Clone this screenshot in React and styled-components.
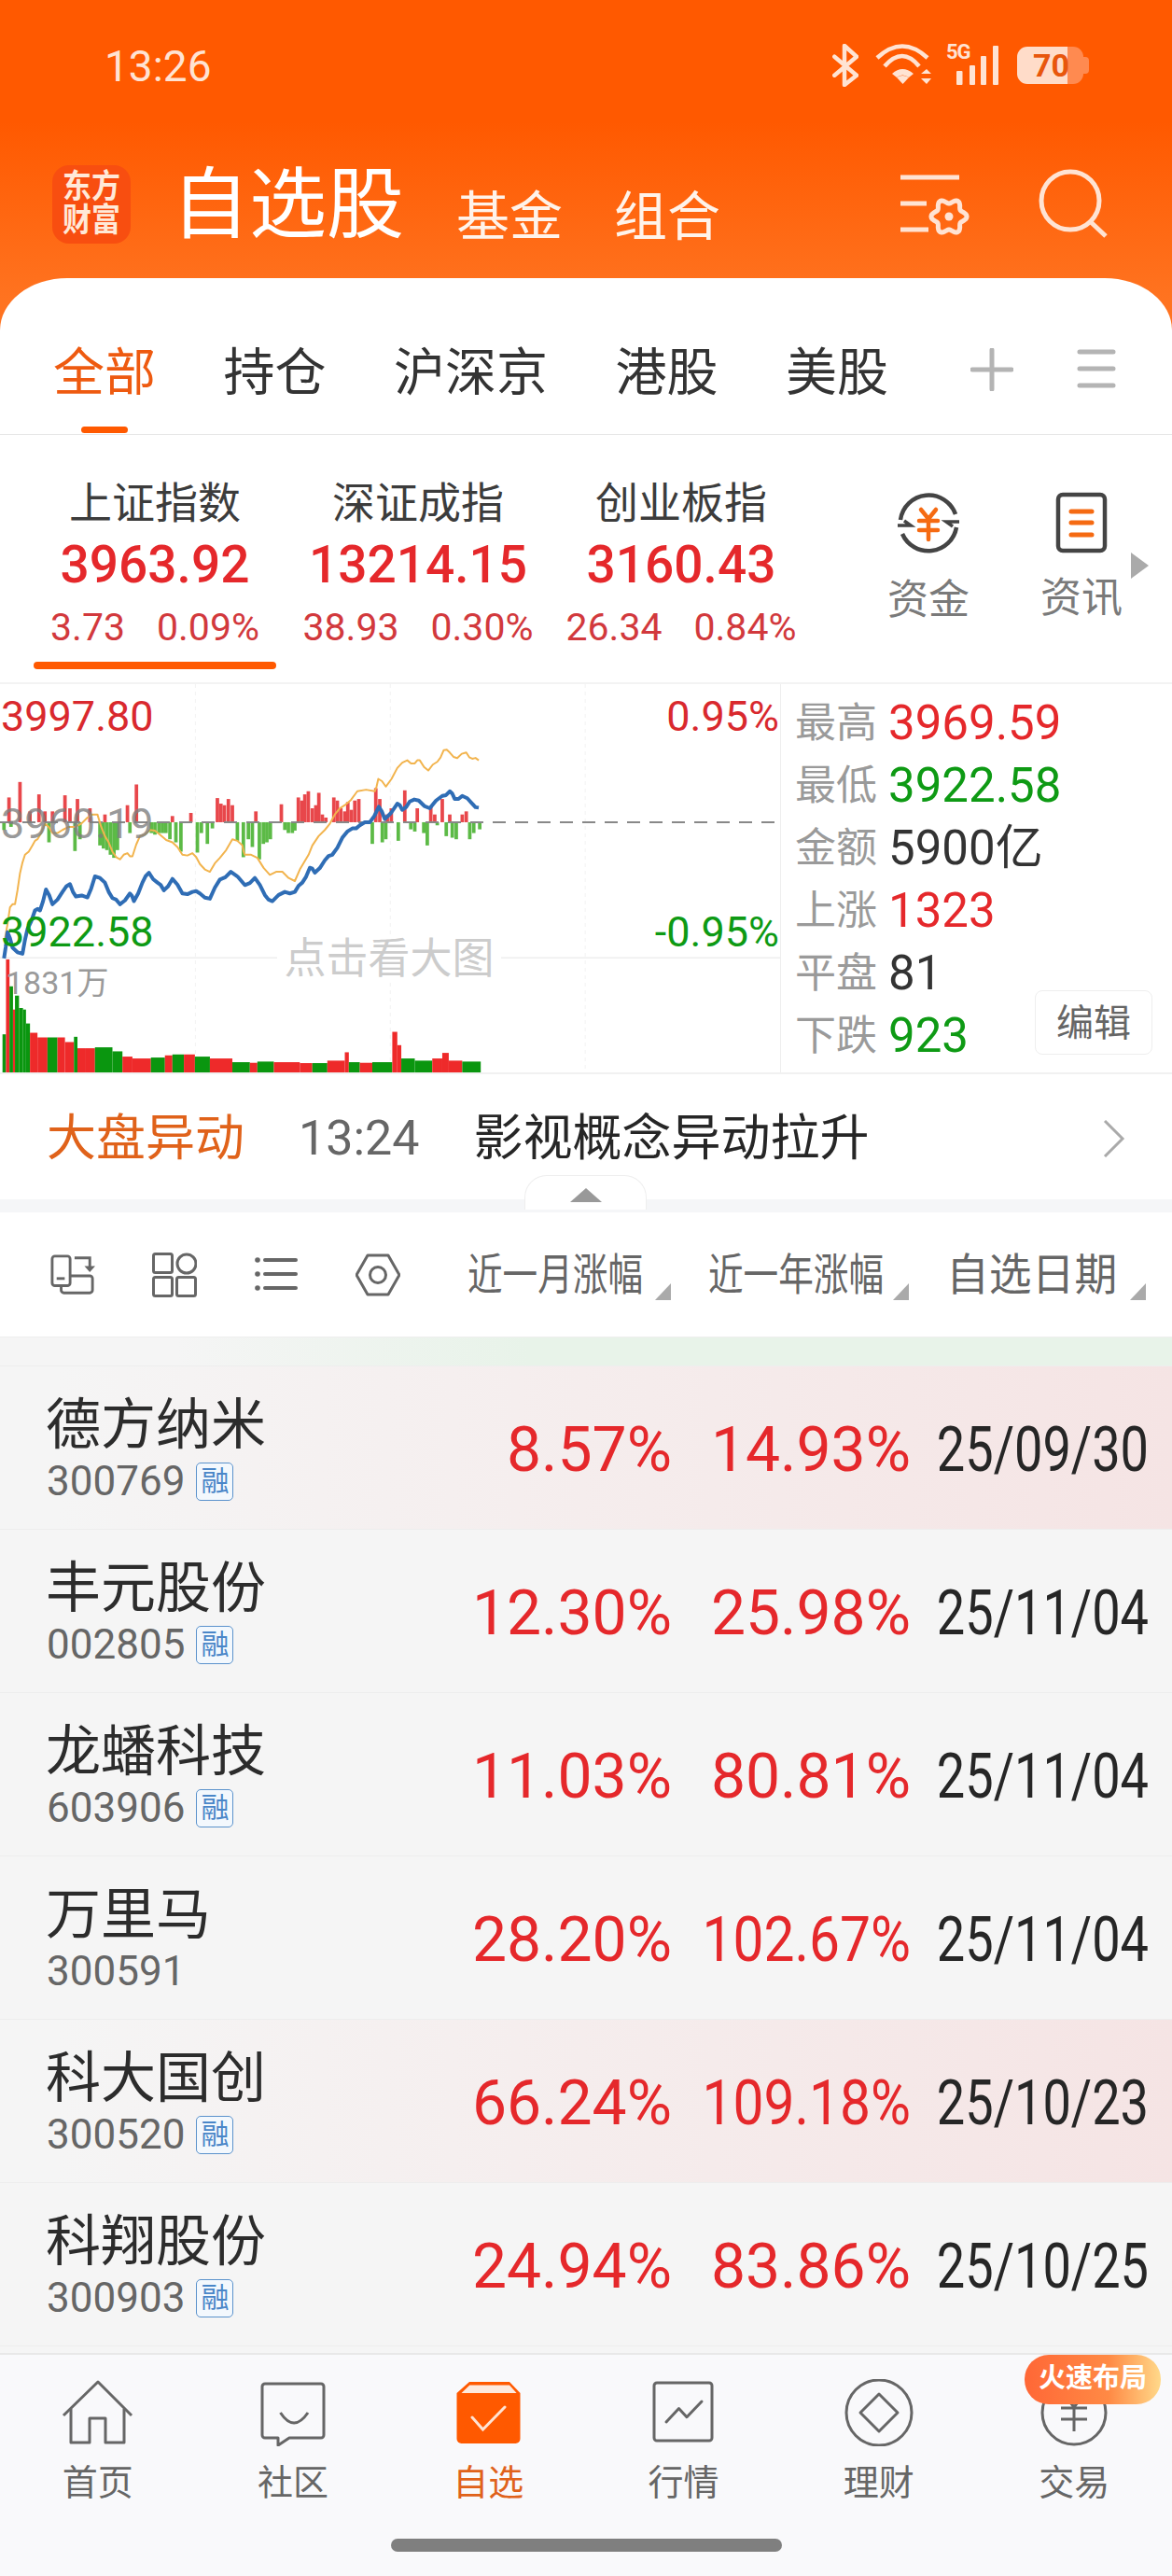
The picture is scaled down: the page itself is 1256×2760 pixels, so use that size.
import styled, { createGlobalStyle } from 'styled-components';

const GlobalStyle = createGlobalStyle`
  html, body {
    margin: 0;
    padding: 0;
    background: #fff;
  }
  * {
    box-sizing: border-box;
  }
`;

const RED = '#e5282b';
const GREEN = '#0e9a14';
const ICON = '#666';
const CREAM = '#ffe3d3';

const orangePts = [[10,830],[20,730],[30,720],[40,620],[50,560],[65,530],[75,510],[90,460],[105,490],[125,480],[150,470],[175,440],[195,430],[210,500],[225,550],[240,575],[255,555],[265,565],[280,500],[300,480],[320,495],[345,520],[365,560],[385,555],[400,590],[420,615],[440,570],[465,510],[485,530],[490,560],[515,570],[540,625],[565,615],[590,645],[610,580],[625,530],[650,480],[670,430],[690,400],[715,355],[750,355],[757,315],[772,340],[795,280],[815,255],[830,265],[840,255],[857,288],[875,260],[888,222],[900,230],[915,248],[933,230],[945,250],[958,255]];
const bluePts = [[8,895],[15,810],[25,860],[45,880],[55,800],[70,740],[80,740],[92,672],[105,720],[125,680],[140,655],[152,695],[175,698],[190,630],[210,650],[225,700],[240,720],[260,685],[268,710],[285,650],[298,618],[315,650],[328,675],[345,638],[365,685],[385,680],[400,685],[420,702],[440,640],[462,615],[490,658],[510,635],[530,690],[545,710],[570,680],[590,680],[605,650],[620,602],[630,618],[650,578],[665,560],[685,505],[705,475],[720,465],[740,455],[758,405],[770,445],[795,395],[805,415],[820,388],[838,385],[860,410],[885,370],[900,355],[910,380],[925,370],[945,395],[958,408]];
const redBars = [[18,375],[40,325],[60,420],[78,365],[90,420],[105,420],[130,368],[140,410],[155,380],[180,410],[210,430],[255,400],[273,333],[345,435],[382,425],[435,377],[442,395],[449,400],[457,380],[465,400],[512,420],[563,397],[597,375],[604,385],[610,365],[617,355],[625,410],[632,400],[638,360],[645,430],[652,440],[668,375],[675,385],[682,410],[690,420],[696,390],[703,415],[710,385],[718,380],[752,345],[760,380],[775,430],[783,410],[810,352],[835,410],[862,405],[870,430],[885,380],[900,430],[925,430],[933,420]];
const greenBars = [[8,480],[22,470],[98,520],[150,548],[160,510],[200,530],[207,540],[214,545],[221,560],[228,570],[235,545],[260,490],[303,490],[310,495],[318,490],[325,490],[332,490],[340,510],[352,520],[362,550],[395,553],[403,490],[415,525],[425,475],[475,515],[487,568],[497,510],[505,535],[519,575],[527,525],[534,520],[541,510],[570,480],[577,490],[585,490],[590,482],[745,525],[765,520],[772,510],[797,515],[822,478],[830,485],[855,530],[848,490],[875,465],[893,500],[905,505],[913,510],[940,510],[948,490],[960,478]];
const volumes = [[5,12,1140,'g'],[12,19,898,'r'],[19,26,985,'g'],[26,31,1060,'r'],[30,38,1015,'g'],[38,46,1055,'g'],[46,52,1060,'g'],[52,60,1105,'g'],[60,75,1135,'r'],[75,95,1150,'r'],[95,115,1150,'g'],[115,130,1150,'r'],[130,148,1165,'r'],[148,155,1148,'g'],[155,170,1185,'r'],[170,190,1185,'r'],[190,225,1182,'g'],[225,245,1195,'g'],[245,265,1212,'r'],[265,302,1218,'r'],[302,330,1215,'g'],[330,345,1208,'r'],[345,368,1205,'g'],[368,390,1205,'r'],[390,420,1212,'g'],[420,465,1218,'r'],[465,500,1230,'g'],[500,515,1232,'r'],[515,548,1228,'g'],[548,600,1230,'r'],[600,625,1233,'r'],[625,655,1233,'g'],[655,690,1225,'r'],[690,698,1198,'r'],[698,720,1230,'g'],[720,745,1232,'r'],[745,785,1230,'g'],[785,795,1132,'r'],[795,803,1175,'r'],[803,830,1218,'g'],[830,865,1225,'g'],[865,885,1218,'r'],[885,898,1200,'r'],[898,925,1225,'r'],[925,962,1228,'g']];

// the real line is a bit jagged, so add a small wobble between the read-off points
const jitter = (pts) =>
  pts.flatMap((p, i) => {
    if (i === 0) return [p];
    const prev = pts[i - 1];
    const mid = [(p[0] + prev[0]) / 2, (p[1] + prev[1]) / 2 + (i % 2 ? 5 : -5)];
    return [mid, p];
  });

const line = (pts) => pts.map((p) => p.join(',')).join(' ');

const gearPath = (() => {
  const out = [];
  for (let i = 0; i < 72; i++) {
    const t = (i / 72) * Math.PI * 2;
    const r = 16.5 + 2.6 * Math.cos(6 * t);
    out.push(`${(54 + r * Math.cos(t)).toFixed(1)} ${(47 + r * Math.sin(t)).toFixed(1)}`);
  }
  return `M${out.join('L')}Z`;
})();

const indices = [
  { label: '上证指数', value: '3963.92', diff: '3.73', pct: '0.09%', active: true },
  { label: '深证成指', value: '13214.15', diff: '38.93', pct: '0.30%' },
  { label: '创业板指', value: '3160.43', diff: '26.34', pct: '0.84%' },
];

const stats = [
  { label: '最高', value: '3969.59', color: RED },
  { label: '最低', value: '3922.58', color: GREEN },
  { label: '金额', value: '5900亿', color: '#333' },
  { label: '上涨', value: '1323', color: RED },
  { label: '平盘', value: '81', color: '#333' },
  { label: '下跌', value: '923', color: GREEN },
];

const stocks = [
  { name: '德方纳米', code: '300769', rong: true, month: '8.57%', year: '14.93%', date: '25/09/30', hot: true },
  { name: '丰元股份', code: '002805', rong: true, month: '12.30%', year: '25.98%', date: '25/11/04' },
  { name: '龙蟠科技', code: '603906', rong: true, month: '11.03%', year: '80.81%', date: '25/11/04' },
  { name: '万里马', code: '300591', month: '28.20%', year: '102.67%', date: '25/11/04' },
  { name: '科大国创', code: '300520', rong: true, month: '66.24%', year: '109.18%', date: '25/10/23', hot: true },
  { name: '科翔股份', code: '300903', rong: true, month: '24.94%', year: '83.86%', date: '25/10/25' },
];

const pctSqueeze = (text) => (text.length > 6 ? 0.89 : 1);

const BluetoothIcon = () => (
  <svg width="28" height="46" viewBox="0 0 28 46" fill="none" stroke={CREAM} strokeWidth="4.5" strokeLinejoin="round" strokeLinecap="round">
    <path d="M2.3 13.7L26 33.7L13 44V2L26 13.7L2.3 33.7" />
  </svg>
);

const WifiIcon = () => (
  <svg width="60" height="46" viewBox="0 0 60 46" fill="none">
    <g stroke={CREAM} strokeWidth="4.5">
      <path d="M2 15Q29 -10 56 15" />
      <path d="M10 24Q29 2 47 24" />
    </g>
    <path d="M18 32Q29 22 41 32L36 36Q29 31 23 36Z" fill={CREAM} />
    <path d="M23 36Q29 32 36 36L29.5 43Z" fill={CREAM} />
    <path d="M49 32L55 27L60 32ZM49 37H60L55 43Z" fill={CREAM} />
  </svg>
);

const SignalIcon = () => (
  <svg width="58" height="44" viewBox="0 0 58 44" fill={CREAM}>
    <rect x="11" y="28" width="6.5" height="15" rx="1" />
    <rect x="25" y="22" width="6" height="21" rx="1" />
    <rect x="37" y="12" width="6" height="31" rx="1" />
    <rect x="50" y="1" width="6" height="42" rx="1" />
  </svg>
);

const SettingsIcon = () => (
  <svg width="78" height="79" viewBox="0 -7 78 79" fill="none" stroke={CREAM} strokeWidth="5">
    <path d="M2 5H65M2 33H30M2 61H32" />
    <path d={gearPath} strokeLinejoin="round" />
    <circle cx="54" cy="47" r="4.5" fill={CREAM} stroke="none" />
  </svg>
);

const SearchIcon = () => (
  <svg width="80" height="80" viewBox="0 0 80 80" fill="none" stroke={CREAM} strokeWidth="5">
    <circle cx="37" cy="37" r="31" />
    <path d="M58 59L75 75" />
  </svg>
);

const PlusIcon = () => (
  <svg width="46" height="46" viewBox="0 0 46 46" stroke="#b4b4b4" strokeWidth="5" strokeLinecap="round">
    <path d="M23 2V44M2 23H44" />
  </svg>
);

const MenuIcon = () => (
  <svg width="42" height="44" viewBox="0 0 42 44" stroke="#b4b4b4" strokeWidth="5" strokeLinecap="round">
    <path d="M3 4H39M3 22H39M3 40H39" />
  </svg>
);

const FundIcon = () => (
  <svg width="68" height="68" viewBox="0 0 68 68" fill="none">
    <g stroke="#444" strokeWidth="4.5">
      <path d="M4 30A30.5 30.5 0 0 1 63 24" />
      <path d="M64 38A30.5 30.5 0 0 1 6 45" />
      <path d="M1 36H15L8 31" strokeWidth="3.5" />
      <path d="M67 32H53L60 37" strokeWidth="3.5" />
    </g>
    <g stroke="#f56a12" strokeWidth="4.5" strokeLinecap="round">
      <path d="M26 19L34 29L42 19M24 31H44M24 41H44M34 29V51" />
    </g>
  </svg>
);

const NewsIcon = () => (
  <svg width="56" height="66" viewBox="0 0 56 66" fill="none">
    <rect x="3" y="3" width="50" height="60" rx="5" stroke="#444" strokeWidth="4.5" />
    <path d="M17 21H39M17 33H39M17 46H39" stroke="#f56a12" strokeWidth="5" strokeLinecap="round" />
  </svg>
);

const SwapIcon = () => (
  <svg width="48" height="48" viewBox="0 0 50 48" fill="none" stroke={ICON} strokeWidth="3">
    <rect x="2" y="3" width="20" height="33" rx="3" />
    <path d="M7 28H16" />
    <path d="M22 25H44a3 3 0 0 1 3 3V41a3 3 0 0 1-3 3H15a3 3 0 0 1-3-3V36" />
    <path d="M27 5H44V18" />
    <path d="M38 14H50L44 21Z" fill={ICON} stroke="none" />
  </svg>
);

const GridIcon = () => (
  <svg width="48" height="48" viewBox="0 0 48 48" fill="none" stroke={ICON} strokeWidth="3">
    <rect x="1.5" y="1.5" width="20" height="20" rx="2" />
    <circle cx="37" cy="12" r="10" />
    <rect x="1.5" y="26.5" width="20" height="20" rx="2" />
    <rect x="26.5" y="26.5" width="20" height="20" rx="2" />
  </svg>
);

const ListIcon = () => (
  <svg width="48" height="48" viewBox="0 0 48 48" fill={ICON}>
    <circle cx="4" cy="8" r="2.8" />
    <circle cx="4" cy="23" r="2.8" />
    <circle cx="4" cy="38" r="2.8" />
    <path d="M12 8H45M12 23H45M12 38H45" stroke={ICON} strokeWidth="4" strokeLinecap="round" />
  </svg>
);

const HexIcon = () => (
  <svg width="48" height="48" viewBox="0 0 48 48" fill="none" stroke={ICON} strokeWidth="3">
    <path d="M13 3H35L47 24L35 45H13L1 24Z" strokeLinejoin="round" />
    <circle cx="24" cy="24" r="8.5" />
  </svg>
);

const HomeIcon = () => (
  <svg width="84" height="72" viewBox="0 0 84 72" fill="none" stroke={ICON} strokeWidth="3" strokeLinejoin="round">
    <path d="M5 39L42 3L78 39" />
    <path d="M13 32V68H33V42H50V68H70V32" />
  </svg>
);

const ChatIcon = () => (
  <svg width="84" height="72" viewBox="0 0 84 72" fill="none" stroke={ICON} strokeWidth="3" strokeLinejoin="round">
    <path d="M12 5H72a3 3 0 0 1 3 3V60a3 3 0 0 1-3 3H38L26 71V63H12a3 3 0 0 1-3-3V8a3 3 0 0 1 3-3Z" />
    <path d="M28.5 36Q43 58 58 36" />
  </svg>
);

const WatchIcon = () => (
  <svg width="84" height="72" viewBox="0 0 84 72" fill="none">
    <path d="M22 3H65L76.5 15V64a5 5 0 0 1-5 5H13.500a5 5 0 0 1-5-5V15Z" fill="#ff5900" />
    <path d="M13.500 15L22.300 6.500H65L72.600 15Z" fill="#fde9dd" />
    <path d="M25 41L36.500 54L60 30" stroke="#ffe3d3" strokeWidth="3" strokeLinecap="round" />
  </svg>
);

const MarketIcon = () => (
  <svg width="84" height="72" viewBox="0 0 84 72" fill="none" stroke={ICON} strokeWidth="3" strokeLinejoin="round">
    <rect x="10" y="4" width="62" height="62" rx="3" />
    <path d="M23 46L36.500 31.500L45 40.700L61 24" strokeLinecap="round" />
  </svg>
);

const WealthIcon = () => (
  <svg width="84" height="72" viewBox="0 0 84 72" fill="none" stroke={ICON} strokeWidth="3" strokeLinejoin="round">
    <circle cx="42" cy="36" r="35" />
    <path d="M42 16L62 36L42 56L22 36Z" />
  </svg>
);

const TradeIcon = () => (
  <svg width="84" height="72" viewBox="0 0 84 72" fill="none" stroke={ICON} strokeWidth="3">
    <circle cx="42" cy="36" r="34" />
    <path d="M34 20L42 30L50 20M28 31H56M28 43H56M42 30V56" />
  </svg>
);

const navItems = [
  { label: '首页', Icon: HomeIcon },
  { label: '社区', Icon: ChatIcon },
  { label: '自选', Icon: WatchIcon, active: true },
  { label: '行情', Icon: MarketIcon },
  { label: '理财', Icon: WealthIcon },
  { label: '交易', Icon: TradeIcon },
];

const App = () => (
  <Page>
    <GlobalStyle />
    <Top>
      <StatusBar>
        <Clock>13:26</Clock>
        <StatusIcons>
          <BluetoothIcon />
          <WifiIcon />
          <Network>
            <SignalIcon />
            <FiveG>5G</FiveG>
          </Network>
          <Battery>70</Battery>
        </StatusIcons>
      </StatusBar>
      <Header>
        <Logo>
          <span>东方</span>
          <span>财富</span>
        </Logo>
        <Title>自选股</Title>
        <SubTitle>基金</SubTitle>
        <SubTitle>组合</SubTitle>
        <HeaderActions>
          <SettingsIcon />
          <SearchIcon />
        </HeaderActions>
      </Header>
      <TabPanel>
        <Tab $active>
          全部
          <TabMark $active />
        </Tab>
        <Tab>
          持仓
          <TabMark />
        </Tab>
        <Tab>
          沪深京
          <TabMark />
        </Tab>
        <Tab>
          港股
          <TabMark />
        </Tab>
        <Tab>
          美股
          <TabMark />
        </Tab>
        <TabTools>
          <PlusIcon />
          <MenuIcon />
        </TabTools>
      </TabPanel>
    </Top>

    <IndexBar>
      <IndexList>
        {indices.map((item) => (
          <IndexCol key={item.label}>
            <IndexLabel>{item.label}</IndexLabel>
            <IndexValue>{item.value}</IndexValue>
            <IndexDiff>
              <span>{item.diff}</span>
              <span>{item.pct}</span>
            </IndexDiff>
            <IndexMark $active={item.active} />
          </IndexCol>
        ))}
      </IndexList>
      <Shortcut>
        <FundIcon />
        <ShortcutLabel>资金</ShortcutLabel>
      </Shortcut>
      <Shortcut>
        <NewsIcon />
        <ShortcutLabel>资讯</ShortcutLabel>
      </Shortcut>
      <MoreArrow />
    </IndexBar>

    <ChartRow>
      <Chart>
        <ChartSvg viewBox="0 9 1561 1254" preserveAspectRatio="none">
          <path d="M391 9V1263M781 9V1263M1171 9V1263" stroke="#f3f3f3" strokeWidth="1" strokeDasharray="4 4" vectorEffect="non-scaling-stroke" />
          <path d="M0 893H1561" stroke="#eee" strokeWidth="1.5" vectorEffect="non-scaling-stroke" />
          {redBars.map(([x, top]) => (
            <rect key={`r${x}`} x={x - 3.5} y={top} width="7" height={455 - top} fill="#e8474b" />
          ))}
          {greenBars.map(([x, bottom]) => (
            <rect key={`g${x}`} x={x - 3.5} y="455" width="7" height={bottom - 455} fill="#5cba46" />
          ))}
          <path d="M0 455H1561" stroke="#888" strokeWidth="2" strokeDasharray="14 10" vectorEffect="non-scaling-stroke" />
          <polyline points={line(jitter(orangePts))} fill="none" stroke="#f2b44e" strokeWidth="2" strokeLinejoin="round" vectorEffect="non-scaling-stroke" />
          <polyline points={line(jitter(bluePts))} fill="none" stroke="#2f6db5" strokeWidth="4" strokeLinejoin="round" vectorEffect="non-scaling-stroke" />
          {volumes.map(([x1, x2, top, kind]) => (
            <rect key={x1} x={x1} y={top} width={x2 - x1} height={1263 - top} fill={kind === 'r' ? '#ee2a2a' : '#0a960f'} />
          ))}
        </ChartSvg>
        <ChartLabel $top={10} $left={1} $color="#d9292e">3997.80</ChartLabel>
        <ChartLabel $top={10} $right={1} $color="#d9292e">0.95%</ChartLabel>
        <ChartLabel $top={125} $left={1} $color="rgba(125,125,125,0.8)">3960.19</ChartLabel>
        <ChartLabel $top={241} $left={1} $color="#0e9a14">3922.58</ChartLabel>
        <ChartLabel $top={241} $right={1} $color="#0e9a14">-0.95%</ChartLabel>
        <VolumeLabel>1831万</VolumeLabel>
        <ChartHint>点击看大图</ChartHint>
      </Chart>
      <StatPanel>
        {stats.map((item) => (
          <StatRow key={item.label}>
            <StatLabel>{item.label}</StatLabel>
            <StatValue $color={item.color}>{item.value}</StatValue>
          </StatRow>
        ))}
        <EditButton>编辑</EditButton>
      </StatPanel>
    </ChartRow>

    <NewsRow>
      <NewsTitle>大盘异动</NewsTitle>
      <NewsTime>13:24</NewsTime>
      <NewsText>影视概念异动拉升</NewsText>
      <svg width="24" height="40" viewBox="0 0 24 40" fill="none" stroke="#aaa" strokeWidth="3">
        <path d="M2 1L21 20L2 39" />
      </svg>
    </NewsRow>

    <Divider>
      <Handle>
        <HandleArrow />
      </Handle>
    </Divider>

    <ColumnHead>
      <ViewIcons>
        <SwapIcon />
        <GridIcon />
        <ListIcon />
        <HexIcon />
      </ViewIcons>
      <SortCols>
        <SortCol $gap={12}>
          <SortText $width={189} $squeeze={0.8}>近一月涨幅</SortText>
          <SortMark />
        </SortCol>
        <SortCol $gap={12}>
          <SortText $width={186} $squeeze={0.8}>近一年涨幅</SortText>
          <SortMark />
        </SortCol>
        <SortCol $gap={14}>
          <SortText $width={183} $squeeze={0.975}>自选日期</SortText>
          <SortMark />
        </SortCol>
      </SortCols>
    </ColumnHead>

    <StockList>
      <TintStrip />
      {stocks.map((s) => (
        <StockRow key={s.code} $hot={s.hot}>
          <NameCol>
            <StockName>{s.name}</StockName>
            <CodeLine>
              <StockCode>{s.code}</StockCode>
              {s.rong && <RongTag>融</RongTag>}
            </CodeLine>
          </NameCol>
          <ValueCell $width={230} $color={RED} $squeeze={pctSqueeze(s.month)}>{s.month}</ValueCell>
          <ValueCell $width={256} $color={RED} $squeeze={pctSqueeze(s.year)}>{s.year}</ValueCell>
          <ValueCell $width={255} $color="#262626" $squeeze={0.82}>{s.date}</ValueCell>
        </StockRow>
      ))}
    </StockList>

    <Nav>
      <NavGrid>
        {navItems.map(({ label, Icon, active }) => (
          <NavItem key={label} $active={active}>
            <Icon />
            <span>{label}</span>
          </NavItem>
        ))}
      </NavGrid>
      <HomeBar />
      <PromoBadge>火速布局</PromoBadge>
    </Nav>
  </Page>
);

const Page = styled.div`
  position: relative;
  display: flex;
  flex-direction: column;
  width: 1256px;
  height: 2760px;
  overflow: hidden;
  background: #fff;
  font-family: Roboto, 'Noto Sans CJK SC', sans-serif;
`;

const Top = styled.div`
  background: linear-gradient(180deg, #ff5900 0, #ff5900 130px, #ff7320 320px);
`;

const StatusBar = styled.div`
  display: flex;
  align-items: center;
  justify-content: space-between;
  height: 140px;
  padding: 0 95px 0 112px;
  color: ${CREAM};
`;

const Clock = styled.div`
  font-size: 46px;
  line-height: 46px;
  margin-top: 2px;
`;

const StatusIcons = styled.div`
  display: flex;
  align-items: center;
  gap: 18px;
`;

const Network = styled.div`
  position: relative;
  display: flex;
  margin-left: -2px;
`;

const FiveG = styled.span`
  position: absolute;
  top: -3px;
  left: 0;
  font-size: 22px;
  line-height: 22px;
  font-weight: 700;
  letter-spacing: -1px;
  color: ${CREAM};
`;

const Battery = styled.div`
  position: relative;
  width: 71px;
  height: 40px;
  padding-right: 15px;
  border-radius: 11px;
  background: linear-gradient(90deg, #ffdcc9 76%, #ff8a50 76%);
  color: #e8560c;
  font-size: 34px;
  line-height: 40px;
  font-weight: 700;
  text-align: right;

  &::after {
    content: '';
    position: absolute;
    top: 11px;
    right: -6px;
    width: 6px;
    height: 18px;
    border-radius: 0 4px 4px 0;
    background: #ff8a50;
  }
`;

const Header = styled.div`
  display: flex;
  align-items: flex-start;
  height: 158px;
  padding: 37px 66px 0 56px;
  color: #fff;
`;

const Logo = styled.div`
  display: flex;
  flex-direction: column;
  align-items: center;
  justify-content: center;
  width: 84px;
  height: 84px;
  border-radius: 18px;
  background: #f84e10;
  color: #ffe9d8;
  font-size: 31px;
  line-height: 36px;
  font-weight: 700;

  span {
    transform: scaleY(1.12);
  }
`;

const Title = styled.div`
  margin: 3px 56px 0 44px;
  font-size: 83px;
  line-height: 80px;
`;

const SubTitle = styled.div`
  margin: 28px 55px 0 0;
  font-size: 57px;
  line-height: 56px;
  color: #fff3ea;
`;

const HeaderActions = styled.div`
  display: flex;
  align-items: flex-start;
  gap: 69px;
  margin: 1px 0 0 auto;
`;

const TabPanel = styled.div`
  display: flex;
  gap: 72.5px;
  height: 168px;
  padding: 74px 60px 0 57px;
  border-radius: 72px 72px 0 0 / 56px 56px 0 0;
  border-bottom: 1px solid #e6e6e6;
  background: #fff;
`;

const Tab = styled.div`
  display: flex;
  flex-direction: column;
  align-items: center;
  font-size: 55px;
  line-height: 54px;
  color: ${(p) => (p.$active ? '#ee5a10' : '#333')};
`;

const TabMark = styled.div`
  width: 50px;
  height: 7px;
  margin-top: 31px;
  border-radius: 4px;
  background: ${(p) => (p.$active ? '#ff5900' : 'transparent')};
`;

const TabTools = styled.div`
  display: flex;
  gap: 68px;
  margin: 1px 0 0 auto;
  height: 46px;
`;

const IndexBar = styled.div`
  position: relative;
  display: flex;
  height: 267px;
  border-bottom: 2px solid #f3f3f3;
`;

const IndexList = styled.div`
  display: grid;
  grid-template-columns: repeat(3, 282px);
  width: 913px;
  padding-left: 25px;
`;

const IndexCol = styled.div`
  display: flex;
  flex-direction: column;
  align-items: center;
  padding-top: 50px;
`;

const IndexLabel = styled.div`
  font-size: 46px;
  line-height: 46px;
  color: #3c3c3c;
`;

const IndexValue = styled.div`
  margin-top: 15px;
  font-size: 55px;
  line-height: 56px;
  font-weight: 500;
  color: ${RED};
`;

const IndexDiff = styled.div`
  display: flex;
  gap: 34px;
  margin-top: 18px;
  font-size: 41px;
  line-height: 42px;
  color: #d2393d;
  white-space: nowrap;
`;

const IndexMark = styled.div`
  width: 260px;
  height: 8px;
  margin-top: 16px;
  border-radius: 4px;
  background: ${(p) => (p.$active ? '#ff5900' : 'transparent')};
`;

const Shortcut = styled.div`
  display: flex;
  flex-direction: column;
  align-items: center;
  width: 164px;
  padding-top: 61px;
`;

const ShortcutLabel = styled.div`
  margin-top: 26px;
  font-size: 44px;
  line-height: 44px;
  color: #7a7a7a;
`;

const MoreArrow = styled.div`
  position: absolute;
  top: 126px;
  left: 1212px;
  width: 0;
  height: 0;
  border-left: 19px solid #aaa;
  border-top: 14px solid transparent;
  border-bottom: 14px solid transparent;
`;

const ChartRow = styled.div`
  display: flex;
  height: 418px;
  border-bottom: 2px solid #f1f1f1;
`;

const Chart = styled.div`
  position: relative;
  width: 837px;
  height: 100%;
  border-right: 1px solid #eee;
`;

const ChartSvg = styled.svg`
  position: absolute;
  top: 0;
  left: 0;
  width: 836px;
  height: 416px;
`;

const ChartLabel = styled.div`
  position: absolute;
  top: ${(p) => p.$top}px;
  ${(p) => (p.$left !== undefined ? `left: ${p.$left}px;` : `right: ${p.$right}px;`)}
  font-size: 45px;
  line-height: 50px;
  color: ${(p) => p.$color};
`;

const VolumeLabel = styled.div`
  position: absolute;
  top: 300px;
  left: 6px;
  font-size: 34px;
  line-height: 40px;
  color: #9a9a9a;
`;

const ChartHint = styled.div`
  position: absolute;
  top: 272px;
  left: 297px;
  width: 240px;
  background: #fff;
  font-size: 45px;
  line-height: 46px;
  color: #ccc;
  text-align: center;
`;

const StatPanel = styled.div`
  position: relative;
  flex: 1;
  padding: 8px 0 0 15px;
`;

const StatRow = styled.div`
  display: flex;
  align-items: center;
  gap: 12px;
  height: 67px;
`;

const StatLabel = styled.div`
  font-size: 44px;
  line-height: 46px;
  color: #9a9a9a;
`;

const StatValue = styled.div`
  font-size: 51px;
  line-height: 50px;
  color: ${(p) => p.$color};
`;

const EditButton = styled.div`
  position: absolute;
  top: 328px;
  right: 21px;
  width: 126px;
  height: 69px;
  border: 1px solid #eee;
  border-radius: 8px;
  background: #fff;
  color: #666;
  font-size: 40px;
  line-height: 70px;
  text-align: center;
`;

const NewsRow = styled.div`
  display: flex;
  align-items: center;
  height: 134px;
  padding: 4px 50px 0 50px;
`;

const NewsTitle = styled.div`
  font-size: 53px;
  line-height: 56px;
  color: #e0621a;
`;

const NewsTime = styled.div`
  margin-left: 58px;
  font-size: 52px;
  line-height: 56px;
  color: #666;
`;

const NewsText = styled.div`
  flex: 1;
  margin-left: 58px;
  font-size: 53px;
  line-height: 56px;
  color: #262626;
`;

const Divider = styled.div`
  position: relative;
  height: 14px;
  background: #f5f6f8;
`;

const Handle = styled.div`
  position: absolute;
  top: -26px;
  left: 562px;
  display: flex;
  justify-content: center;
  width: 131px;
  height: 37px;
  padding-top: 13px;
  border: 1px solid #eee;
  border-bottom: 0;
  border-radius: 24px 24px 0 0;
  background: #fff;
`;

const HandleArrow = styled.div`
  width: 0;
  height: 0;
  border-left: 17px solid transparent;
  border-right: 17px solid transparent;
  border-bottom: 15px solid #999;
`;

const ColumnHead = styled.div`
  display: flex;
  align-items: center;
  height: 133px;
  padding: 0 28px 0 54px;
  background: #fff;
`;

const ViewIcons = styled.div`
  display: flex;
  gap: 61px;
`;

const SortCols = styled.div`
  display: flex;
  gap: 40px;
  margin-left: auto;
`;

const SortCol = styled.div`
  display: flex;
  align-items: flex-end;
  gap: ${(p) => p.$gap}px;
`;

const SortText = styled.div`
  width: ${(p) => p.$width}px;
  font-size: 47px;
  line-height: 50px;
  color: #666;
  white-space: nowrap;
  transform: scaleX(${(p) => p.$squeeze});
  transform-origin: left center;
`;

const SortMark = styled.div`
  width: 0;
  height: 0;
  margin-bottom: -2px;
  border-left: 17px solid transparent;
  border-bottom: 18px solid #aaa;
`;

const StockList = styled.div`
  flex: 1;
  min-height: 0;
  overflow: hidden;
  background: #f5f5f5;
`;

const TintStrip = styled.div`
  height: 32px;
  border-top: 1px solid #eee;
  border-bottom: 1px solid #eee;
  background: linear-gradient(90deg, #f5f5f5 15%, #e8f3e9 45%, #e8f3e9 100%);
`;

const StockRow = styled.div`
  display: flex;
  align-items: center;
  height: 175px;
  border-bottom: 1px solid #ededed;
  background: ${(p) => (p.$hot ? 'linear-gradient(90deg, #f5f5f5 5%, #f5e4e4 100%)' : '#f5f5f5')};
`;

const NameCol = styled.div`
  display: flex;
  flex-direction: column;
  align-self: flex-start;
  width: 490px;
  padding: 34px 0 0 49px;
`;

const StockName = styled.div`
  font-size: 59px;
  line-height: 58px;
  color: #2c2c2c;
`;

const CodeLine = styled.div`
  display: flex;
  align-items: center;
  gap: 12px;
  margin-top: 9px;
  padding-left: 1px;
`;

const StockCode = styled.div`
  font-size: 44px;
  line-height: 44px;
  color: #666;
`;

const RongTag = styled.div`
  width: 40px;
  height: 41px;
  border: 1px solid #5b92cc;
  border-radius: 5px;
  background: #f3f8fd;
  color: #4a86c8;
  font-size: 30px;
  line-height: 38px;
  text-align: center;
`;

const ValueCell = styled.div`
  display: flex;
  justify-content: flex-end;
  width: ${(p) => p.$width}px;
  margin-top: 5px;
  font-size: 66px;
  line-height: 70px;
  color: ${(p) => p.$color};
  white-space: nowrap;
  transform: scaleX(${(p) => p.$squeeze});
  transform-origin: right center;
`;

const Nav = styled.div`
  position: relative;
  flex-shrink: 0;
  height: 239px;
  padding-top: 26px;
  border-top: 2px solid #e8e8e8;
  background: #f9f9fb;
`;

const NavGrid = styled.div`
  display: grid;
  grid-template-columns: repeat(6, 209.300px);
`;

const NavItem = styled.div`
  display: flex;
  flex-direction: column;
  align-items: center;
  gap: 20px;
  font-size: 38px;
  line-height: 38px;
  color: ${(p) => (p.$active ? '#e0621a' : '#666')};
`;

const HomeBar = styled.div`
  width: 419px;
  height: 14px;
  margin: 41px auto 0;
  border-radius: 7px;
  background: #7f7f7f;
`;

const PromoBadge = styled.div`
  position: absolute;
  top: 0;
  right: 12px;
  width: 146px;
  height: 53px;
  border-radius: 26px;
  background: linear-gradient(90deg, #ff6736 0, #ff8a45 62%, #ffd98a 100%);
  color: #fff;
  font-size: 29px;
  line-height: 50px;
  font-weight: 700;
  text-align: center;
`;

export default App;
